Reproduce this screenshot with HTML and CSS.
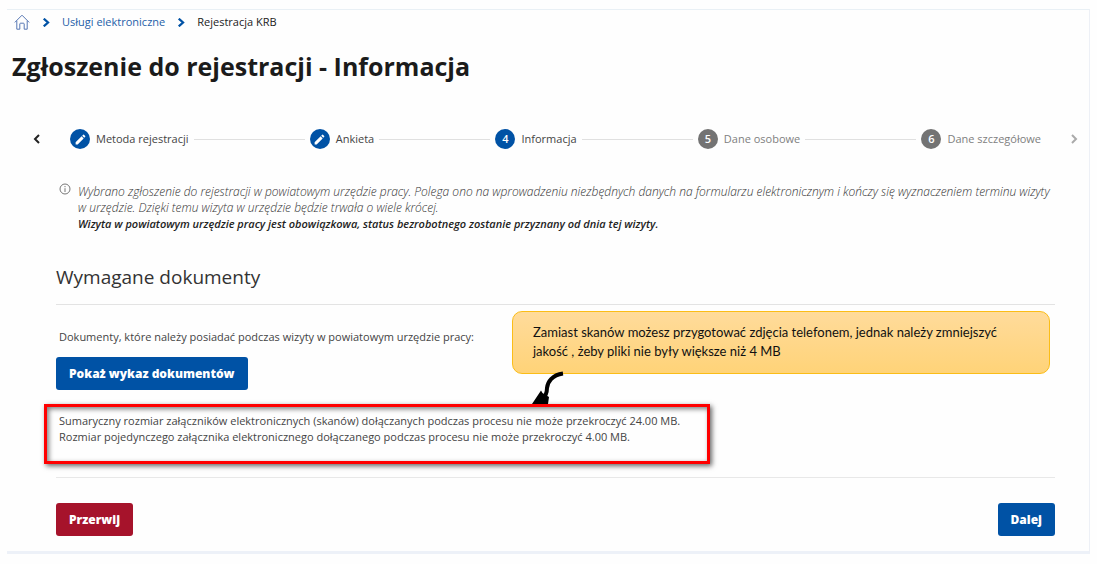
FILE: index.html
```html
<!DOCTYPE html>
<html lang="pl">
<head>
    <meta charset="UTF-8">
    <meta name="viewport" content="width=device-width, initial-scale=1.0">
    <title>Zgłoszenie do rejestracji - Informacja</title>
    <link rel="stylesheet" href="styles.css">
</head>
<body>
    <div class="page">
        <nav class="breadcrumb" aria-label="Ścieżka">
            <a href="#" aria-label="Strona główna">
                <svg class="home" viewBox="0 0 16 16"><path d="M.8 8.400 8 1.200l7.200 7.200M2.800 6.800v8.400h3v-5.200q0-.8.8-.8h2.800q.8 0 .8.8v5.200h3V6.800"/></svg>
            </a>
            <svg class="sep" viewBox="0 0 6 8"><path d="M1 .6 4.800 4 1 7.400"/></svg>
            <a href="#">Usługi elektroniczne</a>
            <svg class="sep" viewBox="0 0 6 8"><path d="M1 .6 4.800 4 1 7.400"/></svg>
            <span>Rejestracja KRB</span>
        </nav>

        <h1>Zgłoszenie do rejestracji - Informacja</h1>

        <div class="stepper">
            <button class="arrow" aria-label="Poprzedni krok">
                <svg viewBox="0 0 6 10"><path d="M5 1 1 5l4 4"/></svg>
            </button>
            <ol class="steps">
                <li class="step">
                    <span class="circle"><svg viewBox="0 0 24 24"><path d="M3 17.25V21h3.75L17.81 9.94l-3.75-3.75L3 17.25zM20.71 7.04a1 1 0 0 0 0-1.41l-2.34-2.34a1 1 0 0 0-1.41 0l-1.83 1.83 3.75 3.75 1.83-1.83z"/></svg></span>
                    Metoda rejestracji
                </li>
                <li class="line"></li>
                <li class="step">
                    <span class="circle"><svg viewBox="0 0 24 24"><path d="M3 17.25V21h3.75L17.81 9.94l-3.75-3.75L3 17.25zM20.71 7.04a1 1 0 0 0 0-1.41l-2.34-2.34a1 1 0 0 0-1.41 0l-1.83 1.83 3.75 3.75 1.83-1.83z"/></svg></span>
                    Ankieta
                </li>
                <li class="line"></li>
                <li class="step"><span class="circle">4</span>Informacja</li>
                <li class="line"></li>
                <li class="step next"><span class="circle">5</span>Dane osobowe</li>
                <li class="line"></li>
                <li class="step next"><span class="circle">6</span>Dane szczegółowe</li>
            </ol>
            <button class="arrow right" aria-label="Następny krok">
                <svg viewBox="0 0 6 10"><path d="m1 1 4 4-4 4"/></svg>
            </button>
        </div>

        <main class="content">
            <div class="info">
                <svg viewBox="0 0 12 12"><circle cx="6" cy="6" r="5"/><path d="M6 5.2V9M6 3v1.2"/></svg>
                <p>
                    Wybrano zgłoszenie do rejestracji w powiatowym urzędzie pracy. Polega ono na wprowadzeniu niezbędnych danych na formularzu elektronicznym i kończy się wyznaczeniem terminu wizyty w&nbsp;urzędzie. Dzięki temu wizyta w urzędzie będzie trwała o wiele krócej.<br>
                    <strong>Wizyta w powiatowym urzędzie pracy jest obowiązkowa, status bezrobotnego zostanie przyznany od dnia tej wizyty.</strong>
                </p>
            </div>

            <h2>Wymagane dokumenty</h2>

            <section class="documents">
                <p class="label">Dokumenty, które należy posiadać podczas wizyty w powiatowym urzędzie pracy:</p>
                <button class="btn">Pokaż wykaz dokumentów</button>

                <div class="limits">
                    Sumaryczny rozmiar załączników elektronicznych (skanów) dołączanych podczas procesu nie może przekroczyć 24.00 MB.<br>
                    Rozmiar pojedynczego załącznika elektronicznego dołączanego podczas procesu nie może przekroczyć 4.00 MB.
                </div>

                <div class="callout">
                    Zamiast skanów możesz przygotować zdjęcia telefonem, jednak należy zmniejszyć jakość , żeby pliki nie były większe niż 4 MB
                    <svg viewBox="0 0 32 35"><path class="tail" d="M31 2.500C20 4 15.500 11 15 17 15 22 13 26 10 29"/><path d="M0 33 9 19.500 10.500 22 17 26 16 33z"/></svg>
                </div>
            </section>

            <div class="actions">
                <button class="btn danger">Przerwij</button>
                <button class="btn">Dalej</button>
            </div>
        </main>
    </div>
</body>
</html>
```

FILE: styles.css
```css
* {
    box-sizing: border-box;
}
body {
    margin: 9px 7px;
    font-family: "Open Sans", sans-serif;
    font-size: 11px;
    line-height: 16px;
    color: #444;
    background: #fefefe;
}
h1, h2, p, ol {
    margin: 0;
    padding: 0;
}
button {
    font-family: inherit;
    border: none;
    cursor: pointer;
}
svg {
    display: block;
    flex: none;
    fill: none;
}
.page {
    border-top: 1px solid #e9f0f5;
    border-right: 1px solid #edf0f6;
    border-bottom: 3px solid #edf1f8;
}
.breadcrumb {
    display: flex;
    align-items: center;
    gap: 12px;
    height: 24px;
    padding-left: 7px;
    color: #222;
}
.breadcrumb a {
    color: #2560a8;
    text-decoration: none;
}
.breadcrumb .home {
    width: 16px;
    height: 16px;
    stroke: #5878b4;
}
.breadcrumb .sep {
    width: 8px;
    height: 9px;
    stroke: #0052a5;
    stroke-width: 2;
}
h1 {
    padding: 14px 5px 0;
    font-size: 25px;
    line-height: 36px;
    color: #1b1b1b;
}
.stepper {
    display: flex;
    align-items: center;
    gap: 29px;
    margin-top: 45px;
    padding: 0 11px 0 26px;
}
.steps {
    display: flex;
    align-items: center;
    flex: 1;
    list-style: none;
}
.step {
    display: flex;
    align-items: center;
    gap: 6px;
    white-space: nowrap;
    color: #444;
}
.circle {
    display: flex;
    align-items: center;
    justify-content: center;
    width: 20px;
    height: 20px;
    border-radius: 50%;
    background: #0052a5;
    color: white;
    font-weight: 600;
}
.circle svg {
    width: 13px;
    height: 13px;
    fill: white;
}
.next {
    color: #808080;
}
.next .circle {
    background: #737373;
}
.line {
    flex: 1;
    margin: 0 5px;
    border-top: 1px solid #e0e0e0;
}
.arrow {
    padding: 0;
    background: none;
}
.arrow svg {
    width: 8px;
    height: 10px;
    stroke: #222;
    stroke-width: 2;
}
.arrow.right svg {
    stroke: #aaa;
}
.content {
    padding: 35px 34px 15px 49px;
}
.info {
    display: flex;
    align-items: flex-start;
    gap: 7px;
    padding-left: 3px;
    font-size: 12px;
    font-style: italic;
    font-weight: 300;
    color: #333;
}
.info svg {
    width: 12px;
    height: 12px;
    margin-top: -1px;
    stroke: #777;
}
.info strong {
    color: #222;
    font-size: 11px;
    font-weight: 600;
}
h2 {
    padding: 31px 0 13px;
    border-bottom: 1px solid #e3e3e3;
    font-size: 19px;
    font-weight: normal;
    line-height: 28px;
    color: #333;
}
.documents {
    position: relative;
    padding: 24px 0 13px;
    border-bottom: 1px solid #e8e8e8;
}
.label {
    padding: 0 3px 12px;
}
.btn {
    height: 33px;
    padding: 0 13px;
    border-radius: 3px;
    background: #0052a5;
    color: white;
    font-size: 12px;
    font-weight: 800;
}
.danger {
    background: #a6132b;
}
.limits {
    width: fit-content;
    margin: 14px 0 0 -12px;
    padding: 6px 27px 16px 12px;
    border: 3px solid #f00;
    box-shadow: 2px 2px 5px rgba(0,0,0,0.6), inset 2px 2px 5px rgba(0,0,0,0.5);
}
.callout {
    position: absolute;
    top: 6px;
    right: 5px;
    width: 538px;
    padding: 11px 20px 12px;
    border: 1px solid #fbbd17;
    border-radius: 10px;
    background: linear-gradient(#ffdb9b, #ffd378);
    color: #111;
    font-family: Lato, sans-serif;
    font-size: 13px;
    line-height: 19px;
}
.callout svg {
    position: absolute;
    top: 59px;
    left: 19px;
    width: 32px;
    height: 35px;
    fill: black;
}
.callout .tail {
    fill: none;
    stroke: black;
    stroke-width: 4;
}
.actions {
    display: flex;
    justify-content: space-between;
    padding-top: 25px;
}
```
